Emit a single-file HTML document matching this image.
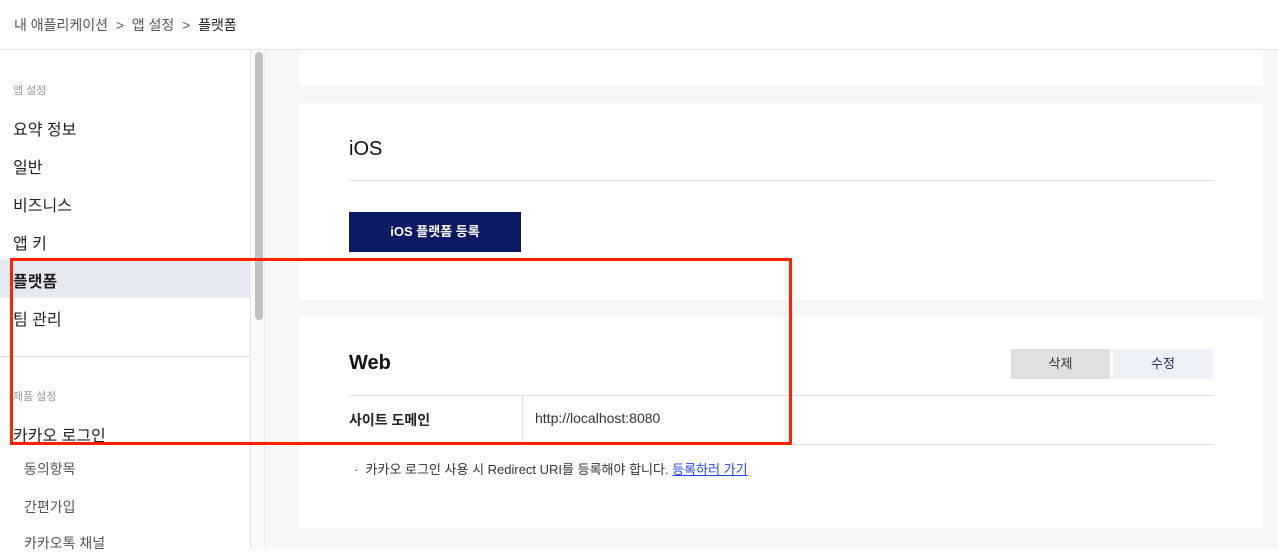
<!DOCTYPE html>
<html><head><meta charset="utf-8"><style>
*{margin:0;padding:0;box-sizing:border-box}
body{width:1278px;height:549px;overflow:hidden;background:#fff;font-family:"Liberation Sans","Noto Sans CJK KR",sans-serif;color:#222;position:relative}
.a{position:absolute;white-space:nowrap}
</style></head><body>
<div class="a" style="left:0;top:0;width:1278px;height:50px;border-bottom:1px solid #e4e4e4;background:#fff"></div>
<div class="a" style="left:14px;top:15px;font-size:14px;color:#555">내 애플리케이션 &nbsp;&gt;&nbsp; 앱 설정 &nbsp;&gt;&nbsp; <span style="color:#222">플랫폼</span></div>
<div class="a" style="left:0;top:50px;width:251px;height:499px;background:#fff;border-right:1px solid #e4e4e4"></div>
<div class="a" style="left:252px;top:50px;width:13px;height:499px;background:#fafafa;border-right:1px solid #ececec"></div>
<div class="a" style="left:255px;top:52px;width:8px;height:268px;background:#c1c1c1;border-radius:4px"></div>
<div class="a" style="left:266px;top:50px;width:1012px;height:499px;background:#f5f6f6"></div>
<div class="a" style="left:13px;top:82px;font-size:11px;color:#999">앱 설정</div>
<div class="a" style="left:13px;top:116px;font-size:16px">요약 정보</div>
<div class="a" style="left:13px;top:154px;font-size:16px">일반</div>
<div class="a" style="left:13px;top:192px;font-size:16px">비즈니스</div>
<div class="a" style="left:13px;top:230px;font-size:16px">앱 키</div>
<div class="a" style="left:0;top:260px;width:251px;height:38px;background:#e6e9f0"></div>
<div class="a" style="left:13px;top:268px;font-size:16px;font-weight:bold">플랫폼</div>
<div class="a" style="left:13px;top:306px;font-size:16px">팀 관리</div>
<div class="a" style="left:0;top:356px;width:251px;height:1px;background:#e0e0e0"></div>
<div class="a" style="left:13px;top:388px;font-size:11px;color:#999">제품 설정</div>
<div class="a" style="left:13px;top:422px;font-size:16px">카카오 로그인</div>
<div class="a" style="left:24px;top:459px;font-size:14px;color:#555">동의항목</div>
<div class="a" style="left:24px;top:497px;font-size:14px;color:#555">간편가입</div>
<div class="a" style="left:24px;top:533px;font-size:14px;color:#555">카카오톡 채널</div>

<div class="a" style="left:299px;top:50px;width:964px;height:36px;background:#fff"></div>
<div class="a" style="left:299px;top:103px;width:964px;height:197px;background:#fff"></div>
<div class="a" style="left:349px;top:138px;font-size:20px;color:#111">iOS</div>
<div class="a" style="left:349px;top:180px;width:864px;height:1px;background:#e0e0e0"></div>
<div class="a" style="left:349px;top:212px;width:172px;height:40px;background:#0b1a62;color:#fff;font-size:13px;font-weight:bold;text-align:center;line-height:40px">iOS 플랫폼 등록</div>

<div class="a" style="left:299px;top:317px;width:964px;height:211px;background:#fff"></div>
<div class="a" style="left:349px;top:352px;font-size:20px;font-weight:bold;color:#111">Web</div>
<div class="a" style="left:1011px;top:349px;width:99px;height:30px;background:#e0e0e0;font-size:13px;text-align:center;line-height:30px;color:#333">삭제</div>
<div class="a" style="left:1113px;top:349px;width:100px;height:30px;background:#eef0f8;font-size:13px;text-align:center;line-height:30px;color:#1a2a6a">수정</div>
<div class="a" style="left:349px;top:395px;width:864px;height:1px;background:#e0e0e0"></div>
<div class="a" style="left:522px;top:396px;width:1px;height:48px;background:#e0e0e0"></div>
<div class="a" style="left:349px;top:444px;width:864px;height:1px;background:#e0e0e0"></div>
<div class="a" style="left:349px;top:410px;font-size:14px;font-weight:bold">사이트 도메인</div>
<div class="a" style="left:535px;top:410px;font-size:14px;color:#333">http://localhost:8080</div>
<div class="a" style="left:354px;top:459px;font-size:13px;color:#333">·&nbsp; 카카오 로그인 사용 시 Redirect URI를 등록해야 합니다. <span style="color:#2244ee;text-decoration:underline">등록하러 가기</span></div>

<div class="a" style="left:10px;top:258px;width:782px;height:187px;border:3px solid #ff2200"></div>
</body></html>
